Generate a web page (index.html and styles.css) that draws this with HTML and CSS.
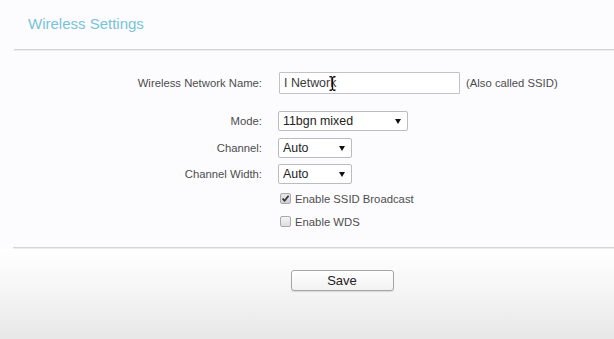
FILE: index.html
```html
<!DOCTYPE html>
<html>
<head>
<meta charset="utf-8">
<link rel="stylesheet" href="styles.css">
</head>
<body>
<div class="page">
  <h1 class="title">Wireless Settings</h1>
  <div class="rule"></div>
  <div class="form">
    <div class="row row-name">
      <label class="label">Wireless Network Name:</label>
      <div class="field">
        <div class="input-wrap">
          <input class="text-input" type="text" value="I Network">
          <svg class="ibeam" width="7" height="15" viewBox="0 0 7 15"><path d="M0.5 0.8h2.2M4.3 0.8h2.2M3.5 1.3v12.4M0.5 14.2h2.2M4.3 14.2h2.2" stroke="#111" stroke-width="1.4" fill="none"/><path d="M2.2 0.8 Q3.5 0.8 3.5 2 M4.8 0.8 Q3.5 0.8 3.5 2 M2.2 14.2 Q3.5 14.2 3.5 13 M4.8 14.2 Q3.5 14.2 3.5 13" stroke="#111" stroke-width="1" fill="none"/></svg>
        </div>
        <span class="hint">(Also called SSID)</span>
      </div>
    </div>
    <div class="row row-select row-mode">
      <label class="label">Mode:</label>
      <div class="select-wrap select-wide">
        <select class="select"><option>11bgn mixed</option></select>
        <span class="arrow"></span>
      </div>
    </div>
    <div class="row row-select">
      <label class="label">Channel:</label>
      <div class="select-wrap select-narrow">
        <select class="select"><option>Auto</option></select>
        <span class="arrow"></span>
      </div>
    </div>
    <div class="row row-select row-select-last">
      <label class="label">Channel Width:</label>
      <div class="select-wrap select-narrow">
        <select class="select"><option>Auto</option></select>
        <span class="arrow"></span>
      </div>
    </div>
    <div class="row row-check">
      <span class="label"></span>
      <label class="check">
        <span class="box checked"><svg width="9" height="9" viewBox="0 0 9 9"><path d="M1.6 4.6 L3.6 6.8 L7.6 1.8" stroke="#333" stroke-width="1.7" fill="none"/></svg></span>
        <span class="check-text">Enable SSID Broadcast</span>
      </label>
    </div>
    <div class="row row-check">
      <span class="label"></span>
      <label class="check">
        <span class="box"></span>
        <span class="check-text">Enable WDS</span>
      </label>
    </div>
  </div>
  <div class="rule rule-bottom"></div>
  <div class="footer">
    <button class="save">Save</button>
  </div>
</div>
</body>
</html>
```
FILE: styles.css
```css
html, body {
  margin: 0;
  padding: 0;
}
body {
  background: #fcfcfe;
  font-family: "Liberation Sans", Arial, sans-serif;
  width: 614px;
  height: 339px;
  overflow: hidden;
}
.page {
  display: flex;
  flex-direction: column;
  height: 339px;
}
.title {
  margin: 0;
  padding: 15px 0 0 28px;
  height: 21px;
  font-size: 15px;
  font-weight: normal;
  color: #78c3da;
  line-height: 18px;
}
.rule {
  margin: 13px 0 0 14px;
  height: 0;
  border-top: 1px solid #d4d4d6;
  border-bottom: 1px solid #ececee;
}
.form {
  padding-top: 21px;
  display: flex;
  flex-direction: column;
}
.row {
  display: flex;
  align-items: center;
}
.label {
  width: 262px;
  margin-right: 16px;
  text-align: right;
  font-size: 11.3px;
  color: #4d4d4d;
  flex: none;
}
.row-name {
  height: 22px;
  margin-bottom: 17px;
}
.field {
  display: flex;
  align-items: center;
}
.input-wrap {
  position: relative;
  margin-left: 1px;
}
.text-input {
  box-sizing: border-box;
  width: 181px;
  height: 22px;
  border: 1px solid #c2c2c4;
  border-radius: 1px;
  background: #fff;
  padding: 0 0 0 4px;
  font-family: "Liberation Sans", Arial, sans-serif;
  font-size: 12.4px;
  color: #3a3a3a;
  outline: none;
  margin: 0;
}
.ibeam {
  position: absolute;
  left: 50px;
  top: 4px;
}
.hint {
  margin-left: 6px;
  font-size: 11.3px;
  color: #4d4d4d;
}
.row-select {
  height: 20px;
  margin-bottom: 6px;
}
.row-mode {
  margin-bottom: 7px;
}
.row-select-last {
  margin-bottom: 3px;
}
.select-wrap {
  position: relative;
  height: 20px;
}
.select-wide { width: 130px; }
.select-narrow { width: 74px; }
.select {
  appearance: none;
  -webkit-appearance: none;
  box-sizing: border-box;
  width: 100%;
  height: 20px;
  border: 1px solid #bcbcbe;
  border-radius: 2px;
  background: #fff;
  padding: 0 0 0 4px;
  margin: 0;
  font-family: "Liberation Sans", Arial, sans-serif;
  font-size: 12.4px;
  color: #222;
  outline: none;
}
.arrow {
  position: absolute;
  right: 7px;
  top: 8px;
  width: 0;
  height: 0;
  border-left: 3px solid transparent;
  border-right: 3px solid transparent;
  border-top: 5px solid #111;
  pointer-events: none;
}
.row-check {
  height: 23px;
}
.check {
  display: flex;
  align-items: center;
  margin-left: 2px;
}
.box {
  box-sizing: border-box;
  width: 11px;
  height: 11px;
  border: 1px solid #a9a9ab;
  border-radius: 2px;
  background: linear-gradient(#f4f4f4, #dedede);
  display: flex;
  align-items: center;
  justify-content: center;
}
.box.checked {
  background: linear-gradient(#e8e8e8, #cfcfcf);
}
.check-text {
  margin-left: 4px;
  font-size: 11.3px;
  color: #4d4d4d;
}
.rule-bottom {
  margin-top: 14px;
  margin-left: 13px;
}
.footer {
  flex: 1;
  background: linear-gradient(#ffffff 0%, #f7f7f7 40%, #e7e7e8 100%);
  display: flex;
  justify-content: center;
  align-items: flex-start;
  padding-top: 21px;
}
.save {
  box-sizing: border-box;
  width: 103px;
  height: 21px;
  margin-left: 70px;
  border: 1px solid #a6a6a8;
  border-radius: 3px;
  background: linear-gradient(#ffffff, #f1f1f1);
  box-shadow: 0 1px 1px rgba(0,0,0,0.12);
  font-family: "Liberation Sans", Arial, sans-serif;
  font-size: 13px;
  color: #222;
  padding: 0;
}
```
